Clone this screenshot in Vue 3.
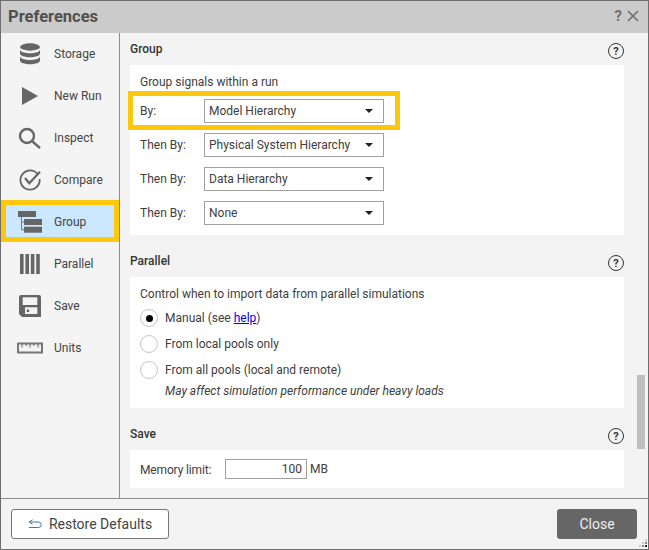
<script setup>
const selects = [
  { label: 'By:', value: 'Model Hierarchy', hi: true },
  { label: 'Then By:', value: 'Physical System Hierarchy' },
  { label: 'Then By:', value: 'Data Hierarchy' },
  { label: 'Then By:', value: 'None' }
]
</script>

<template>
  <div class="win">
    <header class="title">
      <span class="title-text">Preferences</span>
      <span class="title-q">?</span>
      <svg class="title-x" width="12" height="12" viewBox="0 0 12 12"><path d="M1 1l10 10M11 1L1 11" /></svg>
    </header>

    <div class="main">
      <nav class="side">
        <div class="item first">
          <svg width="30" height="30" viewBox="0 0 30 30"><g fill="#666"><ellipse cx="15" cy="8" rx="10" ry="3.7" /><path d="M5 10.5c0 2.2 4.5 3.7 10 3.7s10-1.5 10-3.7v4c0 2.2-4.5 3.7-10 3.7s-10-1.5-10-3.7z" /><path d="M5 17.3c0 2.2 4.5 3.7 10 3.7s10-1.5 10-3.7v4.2c0 2.2-4.5 3.7-10 3.7s-10-1.5-10-3.7z" /></g></svg>
          <span>Storage</span>
        </div>
        <div class="item">
          <svg width="30" height="30" viewBox="0 0 30 30"><polygon points="7,7 23,16 7,25" fill="#666" /></svg>
          <span>New Run</span>
        </div>
        <div class="item">
          <svg width="30" height="30" viewBox="0 0 30 30"><g fill="none" stroke="#666" stroke-width="2.4"><circle cx="12" cy="14" r="7" /><path d="M17.5 19.5l7.5 6.7" /></g></svg>
          <span>Inspect</span>
        </div>
        <div class="item">
          <svg width="30" height="30" viewBox="0 0 30 30"><g fill="none" stroke="#666"><path stroke-width="1.8" d="M22.5 10A9.6 9.6 0 1 0 24.6 15" /><path stroke-width="2.2" d="M10 14l4.3 5.3L25 7.7" /></g></svg>
          <span>Compare</span>
        </div>
        <div class="item active">
          <svg width="30" height="30" viewBox="0 0 30 30"><path d="M6.5 11v12.7H9M6.5 16H9" fill="none" stroke="#777" /><g fill="#666"><rect x="3" y="5" width="18" height="6" /><rect x="9" y="13" width="18" height="6" /><rect x="9" y="20.7" width="18" height="6" /></g></svg>
          <span>Group</span>
        </div>
        <div class="item">
          <svg width="30" height="30" viewBox="0 0 30 30"><g fill="#666"><rect x="5" y="6" width="3.6" height="20" /><rect x="10.4" y="6" width="3.6" height="20" /><rect x="15.8" y="6" width="3.6" height="20" /><rect x="21.2" y="6" width="3.6" height="20" /></g></svg>
          <span>Parallel</span>
        </div>
        <div class="item">
          <svg width="30" height="30" viewBox="0 0 30 30"><path d="M6 5h18a2 2 0 0 1 2 2v20H7l-3-3V7a2 2 0 0 1 2-2z" fill="#666" /><rect x="7.7" y="7.3" width="14.6" height="7.7" fill="#f4f4f4" /><rect x="10" y="17.3" width="12.3" height="6.7" fill="#f4f4f4" /><rect x="11.7" y="19.5" width="2.5" height="2.5" fill="#666" /></svg>
          <span>Save</span>
        </div>
        <div class="item">
          <svg width="30" height="30" viewBox="0 0 30 30"><rect x="3" y="11.5" width="24" height="9" fill="none" stroke="#777" stroke-width="2" /><path d="M7 11v4.500M11.300 11v3M15 11v4.500M18.700 11v3M23 11v4.500" stroke="#777" stroke-width="1.200" /></svg>
          <span>Units</span>
        </div>
      </nav>

      <section class="content">
        <div class="head first-head">
          <h3>Group</h3>
          <span class="help">?</span>
        </div>
        <div class="panel group-panel">
          <p class="lead">Group signals within a run</p>
          <div class="rows">
            <div v-for="s in selects" :key="s.label + s.value" class="row" :class="{ hi: s.hi }">
              <label>{{ s.label }}</label>
              <div class="select">
                <span>{{ s.value }}</span>
                <i class="arrow"></i>
              </div>
            </div>
          </div>
        </div>

        <div class="head">
          <h3>Parallel</h3>
          <span class="help">?</span>
        </div>
        <div class="panel parallel-panel">
          <p class="lead">Control when to import data from parallel simulations</p>
          <div class="radio"><i class="dot on"></i><span>Manual (see <a href="#">help</a>)</span></div>
          <div class="radio"><i class="dot"></i><span>From local pools only</span></div>
          <div class="radio"><i class="dot"></i><span>From all pools (local and remote)</span></div>
          <em class="note">May affect simulation performance under heavy loads</em>
        </div>

        <div class="head">
          <h3>Save</h3>
          <span class="help">?</span>
        </div>
        <div class="panel save-panel">
          <label>Memory limit:</label>
          <div class="num">100</div>
          <span>MB</span>
        </div>

        <div class="scroll"></div>
      </section>
    </div>

    <footer class="foot">
      <button class="restore">
        <svg width="14" height="10" viewBox="0 0 14 10"><path d="M4.500.8L1.200 3l3.300 2.200M1.200 3H10.500a2.700 2.700 0 0 1 0 5.500H1" fill="none" stroke="#3a78ad" /></svg>
        Restore Defaults
      </button>
      <button class="close">Close</button>
      <svg class="grip" width="8" height="10" viewBox="0 0 8 10"><g fill="#ccc"><rect x="6" y="0" width="2" height="2" /><rect x="3" y="3" width="2" height="2" /><rect x="0" y="6" width="2" height="2" /></g><g fill="#888"><rect x="6" y="3" width="2" height="2" /><rect x="3" y="6" width="2" height="2" /></g><rect x="6" y="6" width="2" height="2" fill="#222" /></svg>
    </footer>
  </div>
</template>

<style scoped>
.win {
  position: relative;
  box-sizing: border-box;
  width: 649px;
  height: 550px;
  border: 1px solid #6e6e6e;
  background: #f3f3f3;
  font-family: Roboto, "Liberation Sans", sans-serif;
  font-size: 12px;
  color: #404040;
  display: flex;
  flex-direction: column;
}
.title {
  flex: none;
  box-sizing: border-box;
  height: 32px;
  background: #cbcbcb;
  display: flex;
  align-items: center;
  padding: 0 9px 2px 7px;
}
.title-text {
  flex: 1;
  font-size: 16.500px;
  font-weight: 700;
  color: #505050;
}
.title-q {
  font-size: 15px;
  font-weight: 700;
  color: #707070;
  margin-right: 5px;
}
.title-x path {
  stroke: #707070;
  stroke-width: 1.700;
  fill: none;
}
.main {
  flex: none;
  height: 465px;
  display: flex;
  border-bottom: 1px solid #8c8c8c;
  box-sizing: content-box;
}
.side {
  flex: none;
  width: 118px;
  background: #f4f4f4;
  border-right: 1px solid #8c8c8c;
}
.item {
  position: relative;
  box-sizing: border-box;
  height: 42px;
  display: flex;
  align-items: center;
  padding-left: 14px;
  gap: 9px;
  color: #444;
}
.item span {
  padding-top: 2px;
}
.item.first {
  height: 41px;
}
.item.first span {
  padding-top: 0;
}
.item.active {
  background: #cce8ff;
  border: 5px solid #fdc70b;
  padding-left: 9px;
}
.item svg {
  flex: none;
}
.content {
  position: relative;
  flex: 1;
  min-width: 0;
  padding-left: 10px;
  padding-right: 24px;
  overflow: hidden;
}
.head {
  height: 32px;
  margin-top: 10px;
  display: flex;
  align-items: center;
  justify-content: space-between;
}
.first-head {
  margin-top: 0;
}
.head h3 {
  margin: 0;
  font-size: 12px;
  font-weight: 500;
  color: #333;
}
.help {
  box-sizing: border-box;
  width: 16px;
  height: 16px;
  margin-top: 4px;
  border: 1.500px solid #333;
  border-radius: 50%;
  display: flex;
  align-items: center;
  justify-content: center;
  font-size: 11px;
  font-weight: 700;
  color: #333;
}
.panel {
  background: #fff;
  padding-left: 10px;
}
.lead {
  margin: 0;
  line-height: 16px;
}
.group-panel {
  height: 170px;
  padding-top: 9px;
  box-sizing: border-box;
}
.rows {
  margin-top: 9px;
  display: flex;
  flex-direction: column;
  gap: 10px;
}
.row {
  position: relative;
  height: 24px;
  display: flex;
  align-items: center;
}
.row label {
  width: 64px;
}
.row.hi::after {
  content: "";
  position: absolute;
  left: -12px;
  top: -8px;
  width: 272px;
  height: 39px;
  box-sizing: border-box;
  border: 5px solid #fdc70b;
  pointer-events: none;
}
.select {
  box-sizing: border-box;
  width: 180px;
  height: 24px;
  border: 1px solid #a0a0a0;
  background: #fff;
  display: flex;
  align-items: center;
  justify-content: space-between;
  padding: 0 10px 0 4px;
}
.arrow {
  width: 0;
  height: 0;
  border-left: 4px solid transparent;
  border-right: 4px solid transparent;
  border-top: 4px solid #222;
}
.parallel-panel {
  height: 131px;
  padding-top: 9px;
  box-sizing: border-box;
}
.radio {
  height: 26px;
  display: flex;
  align-items: center;
  gap: 7px;
}
.radio:first-of-type {
  margin-top: 3px;
}
.dot {
  box-sizing: border-box;
  width: 18px;
  height: 18px;
  border: 1px solid #c4c4c4;
  border-radius: 50%;
  display: flex;
  align-items: center;
  justify-content: center;
  background: #fff;
}
.dot.on::before {
  content: "";
  width: 7px;
  height: 7px;
  border-radius: 50%;
  background: #000;
}
.radio a {
  color: #0000ee;
}
.note {
  display: block;
  margin-left: 25px;
  line-height: 16px;
}
.save-panel {
  height: 38px;
  display: flex;
  align-items: center;
}
.save-panel label {
  width: 85px;
  letter-spacing: -0.15px;
  padding-top: 1px;
}
.num {
  box-sizing: border-box;
  width: 82px;
  height: 20px;
  border: 1px solid #a0a0a0;
  text-align: right;
  padding-right: 4px;
  line-height: 18px;
  margin-right: 3px;
}
.scroll {
  position: absolute;
  right: 3px;
  top: 342px;
  width: 8px;
  height: 74px;
  background: #bfbfbf;
}
.foot {
  position: relative;
  flex: 1;
  display: flex;
  align-items: center;
  justify-content: space-between;
  padding: 0 11px 0 10px;
}
.foot button {
  height: 30px;
  border-radius: 3px;
  font-family: Roboto, "Liberation Sans", sans-serif;
  font-size: 14px;
  box-sizing: border-box;
}
.restore {
  width: 158px;
  background: #fff;
  border: 1px solid #777;
  color: #444;
  display: flex;
  align-items: center;
  justify-content: center;
  gap: 7px;
}
.close {
  width: 80px;
  background: #666;
  border: none;
  color: #eee;
}
.grip {
  position: absolute;
  right: 1px;
  bottom: 0;
}
</style>
